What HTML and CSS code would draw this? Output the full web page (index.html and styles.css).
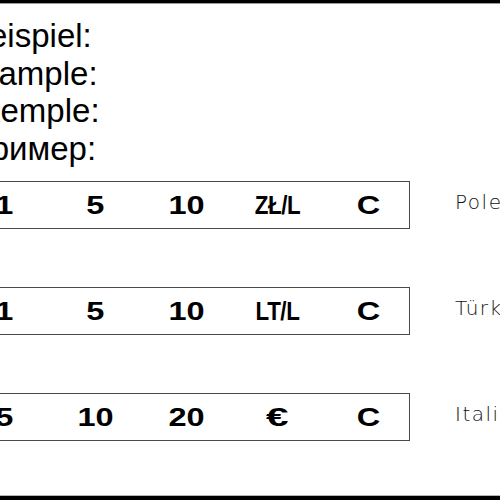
FILE: index.html
```html
<!DOCTYPE html>
<html lang="de">
<head>
<meta charset="utf-8">
<title>Beispiel</title>
<link rel="stylesheet" href="styles.css">
</head>
<body>
<div class="page">
  <div class="bar-top"></div>
  <div class="heading">
    <div class="line l1">Beispiel:</div>
    <div class="line l2">Example:</div>
    <div class="line l3">Exemple:</div>
    <div class="line l4">Пример:</div>
  </div>
  <div class="rows">
    <div class="row">
      <div class="box">
        <div class="cell"><span class="g">0,5</span></div>
        <div class="cell"><span class="g">1</span></div>
        <div class="cell"><span class="g">5</span></div>
        <div class="cell"><span class="g">10</span></div>
        <div class="cell"><span class="unit">ZŁ/L</span></div>
        <div class="cell"><span class="g">C</span></div>
      </div>
      <div class="label">Polen</div>
    </div>
    <div class="row">
      <div class="box">
        <div class="cell"><span class="g">0,5</span></div>
        <div class="cell"><span class="g">1</span></div>
        <div class="cell"><span class="g">5</span></div>
        <div class="cell"><span class="g">10</span></div>
        <div class="cell"><span class="unit">LT/L</span></div>
        <div class="cell"><span class="g">C</span></div>
      </div>
      <div class="label">Türkei</div>
    </div>
    <div class="row">
      <div class="box">
        <div class="cell"><span class="g">2</span></div>
        <div class="cell"><span class="g">5</span></div>
        <div class="cell"><span class="g">10</span></div>
        <div class="cell"><span class="g">20</span></div>
        <div class="cell"><span class="g euro">€</span></div>
        <div class="cell"><span class="g">C</span></div>
      </div>
      <div class="label">Italien</div>
    </div>
  </div>
  <div class="bar-bottom"></div>
</div>
</body>
</html>
```

FILE: styles.css
```css
html, body {
  margin: 0;
  padding: 0;
  background: #fff;
}

.page {
  width: 500px;
  height: 500px;
  overflow: hidden;
  display: flex;
  flex-direction: column;
  font-family: "Liberation Sans", Arial, sans-serif;
  color: #000;
}

.bar-top {
  height: 3px;
  background: #000;
  border-bottom: 1px solid #9a9a9a;
  flex: none;
}

.bar-bottom {
  margin-top: auto;
  height: 4px;
  background: #000;
  border-top: 1px solid #b5b5b5;
  flex: none;
}

.heading {
  margin-top: 13px;
  font-size: 33px;
  line-height: 37.5px;
  white-space: nowrap;
}

.line {
  margin-left: -33px;
}

.l2 {
  margin-left: -40px;
}

.l3 {
  margin-left: -38px;
}

.rows {
  margin-top: 14px;
  display: flex;
  flex-direction: column;
  gap: 58px;
}

.row {
  display: flex;
  align-items: center;
}

.box {
  flex: none;
  box-sizing: border-box;
  width: 550px;
  height: 48px;
  margin-left: -140px;
  border: 1.5px solid #4a4a4a;
  padding-left: 7px;
  display: grid;
  grid-template-columns: repeat(6, 91px);
  align-items: center;
  font-weight: bold;
  font-size: 26px;
  line-height: 42px;
  white-space: nowrap;
}

.cell {
  text-align: center;
}

.g {
  display: inline-block;
  transform: scaleX(1.25);
}

.euro {
  transform: scaleX(1.55);
}

.unit {
  display: inline-block;
  letter-spacing: -0.5px;
  transform: scaleX(0.86);
}

.label {
  flex: none;
  margin-left: 45px;
  margin-top: -6px;
  font-family: "DejaVu Sans", sans-serif;
  font-weight: 200;
  font-size: 20px;
  letter-spacing: 1.5px;
  color: #111;
  white-space: nowrap;
}
```
